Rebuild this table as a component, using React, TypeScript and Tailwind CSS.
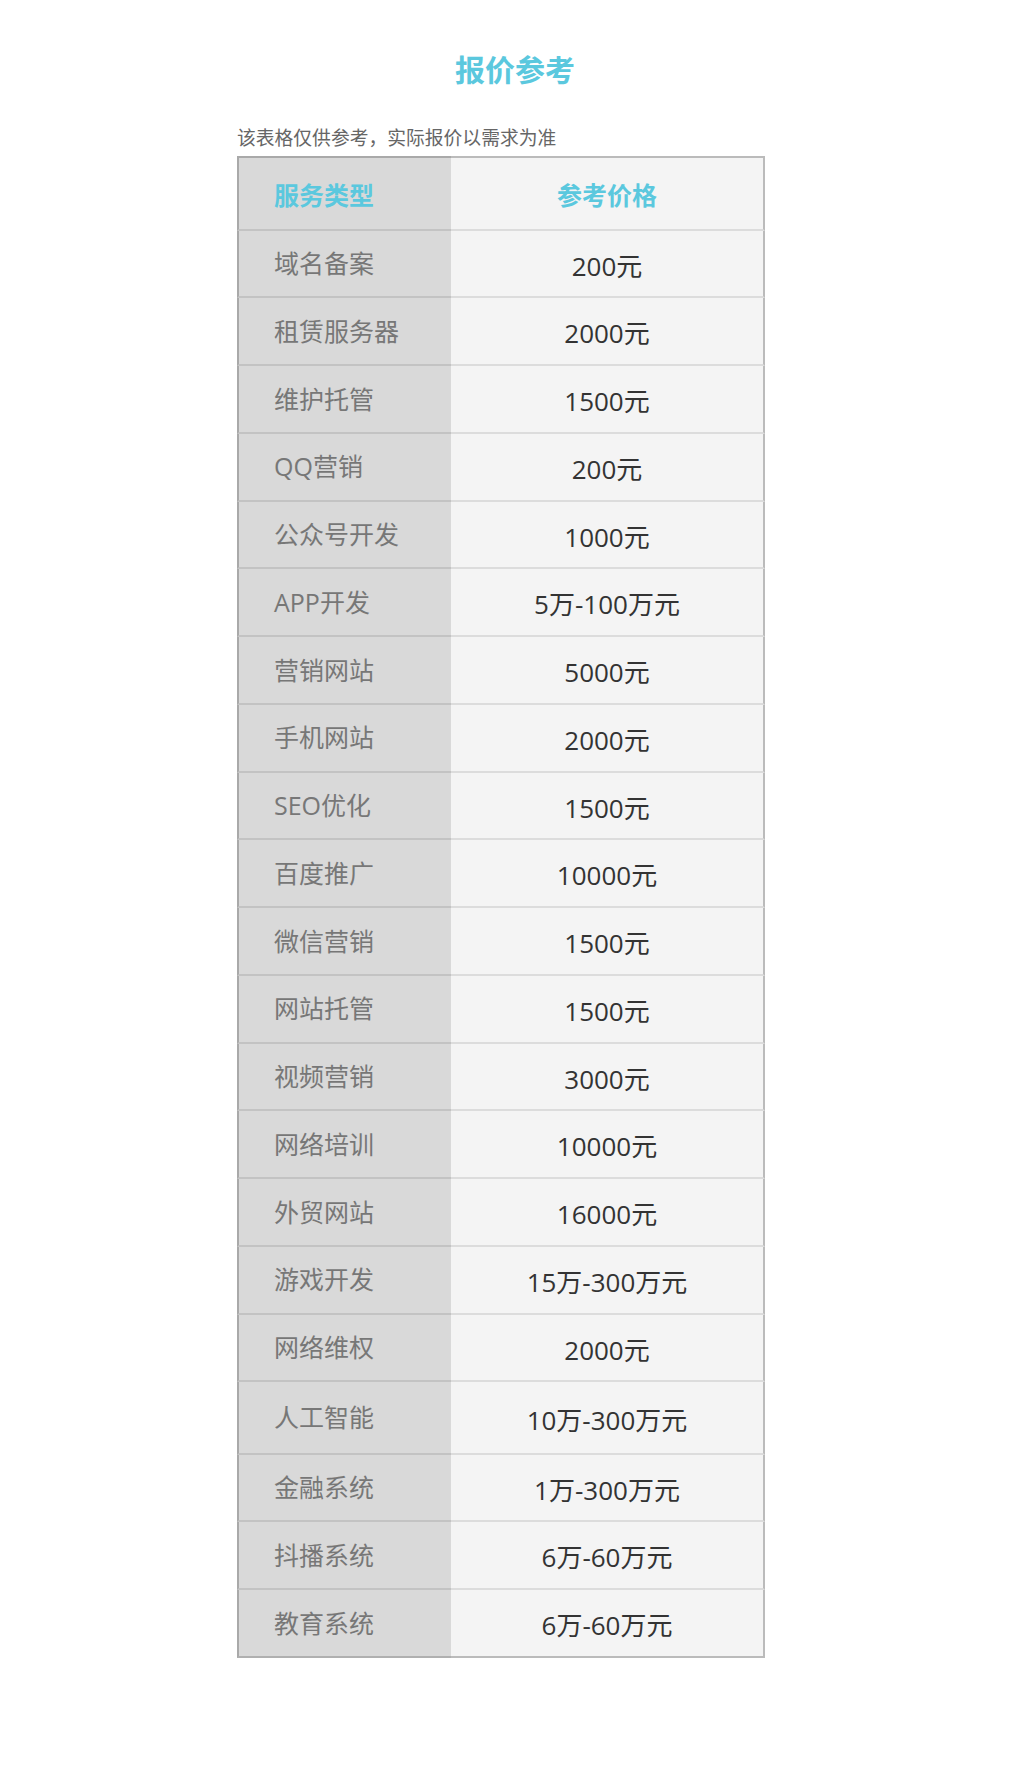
import React from "react";

const rows: { name: string; price: string; tall?: boolean }[] = [
  { name: "域名备案", price: "200元" },
  { name: "租赁服务器", price: "2000元" },
  { name: "维护托管", price: "1500元" },
  { name: "QQ营销", price: "200元" },
  { name: "公众号开发", price: "1000元" },
  { name: "APP开发", price: "5万-100万元" },
  { name: "营销网站", price: "5000元" },
  { name: "手机网站", price: "2000元" },
  { name: "SEO优化", price: "1500元" },
  { name: "百度推广", price: "10000元" },
  { name: "微信营销", price: "1500元" },
  { name: "网站托管", price: "1500元" },
  { name: "视频营销", price: "3000元" },
  { name: "网络培训", price: "10000元" },
  { name: "外贸网站", price: "16000元" },
  { name: "游戏开发", price: "15万-300万元" },
  { name: "网络维权", price: "2000元" },
  { name: "人工智能", price: "10万-300万元", tall: true },
  { name: "金融系统", price: "1万-300万元" },
  { name: "抖播系统", price: "6万-60万元" },
  { name: "教育系统", price: "6万-60万元" },
];

export default function App() {
  const font = { fontFamily: '"Open Sans", "Noto Sans CJK SC", sans-serif' };
  return (
    <div className="w-[1024px] h-[1778px] bg-white" style={font}>
      <div className="pt-[55px] pl-[6px] text-center">
        <h1 className="text-[30px] leading-[30px] font-bold text-[#5bc8de]">报价参考</h1>
      </div>
      <div className="ml-[237px] w-[528px] mt-[44px]">
        <p className="text-[18.8px] leading-[19px] text-[#666666]">该表格仅供参考，实际报价以需求为准</p>
        <div className="mt-[8px] flex flex-col">
          {/* header */}
          <div className="flex h-[74.7px]">
            <div className="w-[214px] bg-[#d9d9d9] border-l-2 border-t-2 border-b-2 border-l-[#a9a9a9] border-t-[#a9a9a9] border-b-[#c3c3c3] flex items-center pl-[35px] pt-[4px]">
              <span className="text-[25px] font-bold text-[#5bc8de] leading-none">服务类型</span>
            </div>
            <div className="flex-1 bg-[#f4f4f4] border-r-2 border-t-2 border-b-2 border-r-[#bbbbbb] border-t-[#bbbbbb] border-b-[#dcdcdc] flex items-center justify-center pt-[4px]">
              <span className="text-[25px] font-bold text-[#5bc8de] leading-none">参考价格</span>
            </div>
          </div>
          {rows.map((r, i) => {
            const last = i === rows.length - 1;
            return (
              <div key={i} className={r.tall ? "flex h-[72.3px]" : "flex h-[67.75px]"}>
                <div
                  className={
                    "w-[214px] bg-[#d9d9d9] border-l-2 border-b-2 border-l-[#a9a9a9] flex items-center pl-[35px] " +
                    (last ? "border-b-[#b0b0b0]" : "border-b-[#c3c3c3]")
                  }
                >
                  <span className="text-[25px] leading-none text-[#777777]">{r.name}</span>
                </div>
                <div
                  className={
                    "flex-1 bg-[#f4f4f4] border-r-2 border-b-2 border-r-[#bbbbbb] flex items-center justify-center pt-[4px] " +
                    (last ? "border-b-[#bbbbbb]" : "border-b-[#dcdcdc]")
                  }
                >
                  <span className="text-[26px] leading-none text-[#333333]">{r.price}</span>
                </div>
              </div>
            );
          })}
        </div>
      </div>
    </div>
  );
}
